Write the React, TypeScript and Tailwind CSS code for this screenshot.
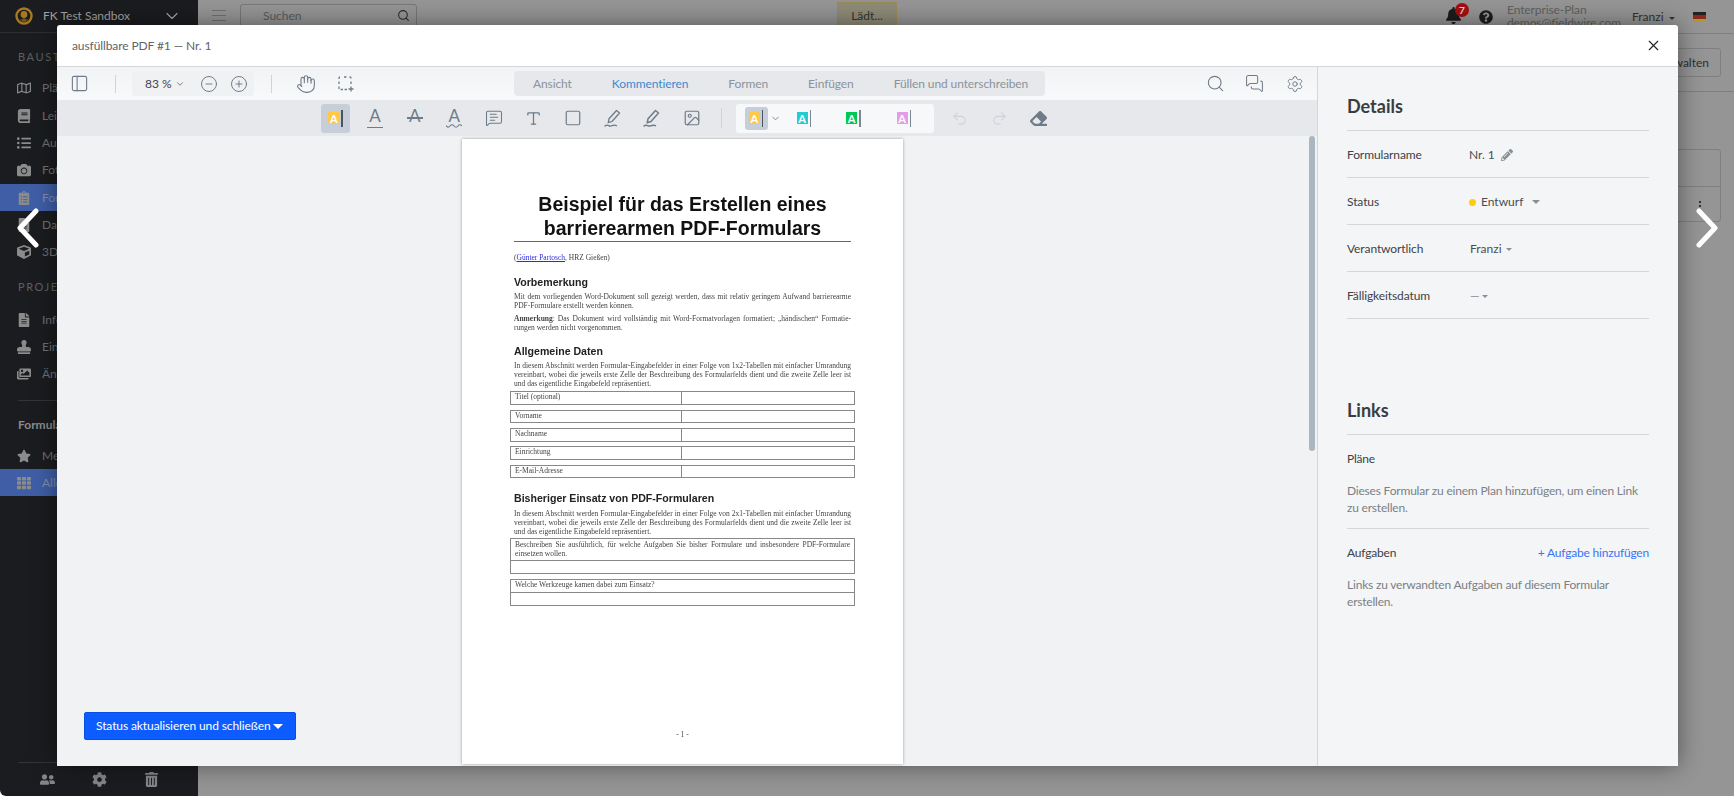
import type { ReactNode } from "react";
import {
  ChevronDown,
  CircleMinus,
  CirclePlus,
  Hand,
  Image,
  MessageSquareText,
  MessagesSquare,
  PanelLeft,
  Redo2,
  Search,
  Settings,
  Square,
  Type,
  Undo2,
  X,
} from "lucide-react";
import {
  FaBell,
  FaBook,
  FaCamera,
  FaClipboardList,
  FaCog,
  FaCube,
  FaEraser,
  FaFileAlt,
  FaImages,
  FaListUl,
  FaPencilAlt,
  FaQuestionCircle,
  FaRegMap,
  FaStamp,
  FaStar,
  FaTh,
  FaTrashAlt,
  FaUserFriends,
} from "react-icons/fa";

// ── Sidebar ───────────────────────────────────────────────────────────────────

function NavRow({ icon, label, active, h = "h-[27px]" }: { icon: ReactNode; label: string; active?: boolean; h?: string }) {
  return (
    <div className={`flex ${h} items-center pl-[17px] text-[12px] ${active ? "bg-[#3f5ea6] text-[#7f8bab]" : "text-[#6f7072]"}`}>
      <span className="flex w-[25px] justify-start text-[14px] text-[#8b8b8c]">{icon}</span>
      {label}
    </div>
  );
}

function Sidebar() {
  return (
    <aside className="flex w-[198px] shrink-0 flex-col bg-[#1b1c1f]">
      <div className="flex h-[33px] items-center border-b border-[#2e2f32] pl-[15px] pr-[16px] text-[12px] text-[#a3a4a5]">
        <svg width="18" height="18" viewBox="0 0 18 18" className="mr-[10px]">
          <circle cx="9" cy="9" r="7.5" fill="none" stroke="#a8781f" strokeWidth="2.4" />
          <circle cx="9" cy="7.5" r="3.4" fill="#a8781f" />
          <path d="M5 13 L9 16 L13 13 L9 11 Z" fill="#6b5321" />
        </svg>
        FK Test Sandbox
        <ChevronDown className="ml-auto h-[20px] w-[20px] text-[#a3a4a5]" strokeWidth={1.4} />
      </div>
      <div className="mt-[15px] flex h-[18px] items-center pl-[18px] text-[11px] tracking-[1.6px] text-[#5f6062]">BAUSTELLE</div>
      <div className="mt-[8px]">
        <NavRow icon={<FaRegMap />} label="Pläne" h="h-[28px]" />
        <NavRow icon={<FaBook />} label="Leistungen" h="h-[27px]" />
        <NavRow icon={<FaListUl />} label="Aufgaben" />
        <NavRow icon={<FaCamera />} label="Fotos" h="h-[28px]" />
        <NavRow icon={<FaClipboardList />} label="Formulare" active />
        <NavRow icon={<FaFileAlt />} label="Dateien" />
        <NavRow icon={<FaCube />} label="3D-BIM" />
      </div>
      <div className="mt-[13px] flex h-[18px] items-center pl-[18px] text-[11px] tracking-[1.6px] text-[#5f6062]">PROJEKT</div>
      <div className="mt-[10px]">
        <NavRow icon={<FaFileAlt />} label="Informationen" />
        <NavRow icon={<FaStamp />} label="Einstellungen" />
        <NavRow icon={<FaImages />} label="Änderungen" />
      </div>
      <div className="mx-[18px] mt-[13px] border-t border-[#333437]" />
      <div className="mt-[15px] flex h-[18px] items-center pl-[18px] text-[12px] font-bold text-[#8a8b8c]">Formulare</div>
      <div className="mt-[8px]">
        <NavRow icon={<FaStar />} label="Meine" />
        <NavRow icon={<FaTh />} label="Alle" active />
      </div>
      <div className="mx-[18px] mt-auto flex h-[34px] items-center border-t border-[#333437] pl-[22px] text-[15px] text-[#85868a]">
        <FaUserFriends className="h-[15px] w-[15px]" />
        <FaCog className="ml-[37px] h-[15px] w-[15px]" />
        <FaTrashAlt className="ml-[37px] h-[15px] w-[15px]" />
      </div>
    </aside>
  );
}

// ── Dimmed page behind the dialog ─────────────────────────────────────────────

function Backdrop() {
  return (
    <main className="flex min-w-0 flex-1 flex-col bg-[#949594]">
      <header className="flex h-[34px] shrink-0 items-start border-b border-[#7e7f7e]">
        <div className="ml-[14px] mt-[10px] flex w-[14px] shrink-0 flex-col gap-[4px]">
          <span className="h-px bg-[#6f706f]" />
          <span className="h-px bg-[#6f706f]" />
          <span className="h-px bg-[#6f706f]" />
        </div>
        <div className="ml-[14px] mt-[4px] flex h-[28px] w-[177px] shrink-0 items-center rounded-t-[3px] border border-[#767776] pb-[5px] pl-[22px] pr-[6px] text-[12px] text-[#5a5b5a]">
          Suchen
          <Search className="ml-auto h-[13px] w-[13px] text-[#2b2b2b]" strokeWidth={2} />
        </div>
        <div className="ml-[420px] mt-[2px] flex h-[30px] w-[60px] shrink-0 items-start justify-center border border-[#9c8a58] bg-[#8f8b78] pt-[4px] text-[12px] text-[#33332e]">
          Lädt...
        </div>
        <div className="relative ml-[548px] mt-[7px] shrink-0 text-[#1c1c1c]">
          <FaBell className="h-[17px] w-[17px]" />
          <span className="absolute -top-[4px] left-[10px] flex h-[14px] w-[14px] items-center justify-center rounded-full bg-[#a50f10] text-[10px] font-bold text-[#d8d8d8]">7</span>
        </div>
        <FaQuestionCircle className="ml-[17px] mt-[10px] h-[14px] w-[14px] shrink-0 text-[#1c1c1c]" />
        <div className="ml-[14px] mt-[3px] w-[113px] shrink-0 text-[12px] leading-[13px] tracking-[-0.1px] text-[#5f605f]">
          <div>Enterprise-Plan</div>
          <div>demos@fieldwire.com</div>
        </div>
        <div className="ml-[12px] mt-[8px] flex shrink-0 items-center text-[12px] text-[#333]">
          Franzi
          <span className="ml-[5px] mt-[2px] border-x-[3px] border-t-[3px] border-x-transparent border-t-[#333]" />
        </div>
        <div className="ml-[18px] mt-[12px] flex h-[10px] w-[13px] shrink-0 flex-col">
          <span className="flex-1 bg-[#222]" />
          <span className="flex-1 bg-[#8c2a1f]" />
          <span className="flex-1 bg-[#b09a2c]" />
        </div>
      </header>
      <div className="flex h-[58px] shrink-0 items-center justify-end border-b border-[#7e7f7e] pr-[13px]">
        <div className="flex h-[29px] items-center rounded-[3px] border border-[#7e7f7e] px-[11px] text-[12px] text-[#2e2e2e]">Verwalten</div>
      </div>
      <div className="ml-[20px] mr-[13px] mt-[57px] rounded-[3px] border border-[#7e7f7e]">
        <div className="h-[37px] border-b border-[#7e7f7e]" />
        <div className="flex h-[34px] items-start justify-end pr-[19px] pt-[14px]">
          <div className="flex flex-col gap-[2px]">
            <span className="h-[2px] w-[2px] bg-[#333]" />
            <span className="h-[2px] w-[2px] bg-[#333]" />
            <span className="h-[2px] w-[2px] bg-[#333]" />
          </div>
        </div>
      </div>
    </main>
  );
}

// ── PDF page ──────────────────────────────────────────────────────────────────

function Line({ children, last }: { children: ReactNode; last?: boolean }) {
  return <div className={`h-[9.2px] whitespace-nowrap ${last ? "" : "[text-align-last:justify]"}`}>{children}</div>;
}

function Heading({ children, className }: { children: ReactNode; className: string }) {
  return <div className={`font-['Liberation_Sans',sans-serif] text-[10.6px] font-bold leading-[13px] text-[#222] ${className}`}>{children}</div>;
}

function PdfRow({ label }: { label: string }) {
  return (
    <div className="mb-[4.9px] flex h-[13.5px] border border-[#888]">
      <div className="w-[171px] border-r border-[#888] pl-[4px] leading-[9px]">{label}</div>
    </div>
  );
}

function PdfPage() {
  return (
    <div className="h-[625px] w-[441px] bg-white pt-[53px] font-['Liberation_Serif',serif] text-[7.5px] leading-[9.2px] text-[#444] shadow-[0_0_3px_rgba(0,0,0,0.35)]">
      <div className="blur-[0.4px]">
        <div className="text-center font-['Liberation_Sans',sans-serif] text-[19.5px] font-bold leading-[24px] text-[#111]">
          <div>Beispiel für das Erstellen eines</div>
          <div>barrierearmen PDF-Formulars</div>
        </div>
        <div className="mx-[52px] mt-[1px] border-t border-[#666]" />
        <div className="mx-[52px] mt-[11px]">
          (<span className="text-[#2a2ae8] underline">Günter Partosch</span>, HRZ Gießen)
        </div>
        <div className="mx-[52px]">
          <Heading className="mt-[14px]">Vorbemerkung</Heading>
          <div className="mt-[2.9px]">
            <Line>Mit dem vorliegenden Word-Dokument soll gezeigt werden, dass mit relativ geringem Aufwand barrierearme</Line>
            <Line last>PDF-Formulare erstellt werden können.</Line>
            <div className="mt-[3.6px]">
              <Line><b>Anmerkung</b>: Das Dokument wird vollständig mit Word-Formatvorlagen formatiert; „händischen“ Formatie-</Line>
              <Line last>rungen werden nicht vorgenommen.</Line>
            </div>
          </div>
          <Heading className="mt-[12.7px]">Allgemeine Daten</Heading>
          <div className="mt-[2.9px]">
            <Line>In diesem Abschnitt werden Formular-Eingabefelder in einer Folge von 1x2-Tabellen mit einfacher Umrandung</Line>
            <Line>vereinbart, wobei die jeweils erste Zelle der Beschreibung des Formularfelds dient und die zweite Zelle leer ist</Line>
            <Line last>und das eigentliche Eingabefeld repräsentiert.</Line>
          </div>
        </div>
        <div className="mx-[48px] mt-[2.7px]">
          <PdfRow label="Titel (optional)" />
          <PdfRow label="Vorname" />
          <PdfRow label="Nachname" />
          <PdfRow label="Einrichtung" />
          <PdfRow label="E-Mail-Adresse" />
        </div>
        <div className="mx-[52px]">
          <Heading className="mt-[14px]">Bisheriger Einsatz von PDF-Formularen</Heading>
          <div className="mt-[3.2px]">
            <Line>In diesem Abschnitt werden Formular-Eingabefelder in einer Folge von 2x1-Tabellen mit einfacher Umrandung</Line>
            <Line>vereinbart, wobei die jeweils erste Zelle der Beschreibung des Formularfelds dient und die zweite Zelle leer ist</Line>
            <Line last>und das eigentliche Eingabefeld repräsentiert.</Line>
          </div>
        </div>
        <div className="mx-[48px] mt-[1.7px] border border-[#888]">
          <div className="h-[22px] border-b border-[#888] px-[4px] pt-[1px]">
            <Line>Beschreiben Sie ausführlich, für welche Aufgaben Sie bisher Formulare und insbesondere PDF-Formulare</Line>
            <Line last>einsetzen wollen.</Line>
          </div>
          <div className="h-[12.3px]" />
        </div>
        <div className="mx-[48px] mt-[5px] border border-[#888]">
          <div className="h-[13px] border-b border-[#888] pl-[4px]">Welche Werkzeuge kamen dabei zum Einsatz?</div>
          <div className="h-[12px]" />
        </div>
        <div className="mt-[124.4px] text-center">- 1 -</div>
      </div>
    </div>
  );
}

// ── Toolbar bits ──────────────────────────────────────────────────────────────

function TextTool({ variant }: { variant: "under" | "strike" | "wave" }) {
  return (
    <div className="relative flex h-[22px] w-[20px] items-start justify-center text-[17px] leading-[17px] text-[#6f7b88]">
      A
      {variant === "under" && <span className="absolute bottom-[1px] left-[2px] right-[2px] h-[1.5px] bg-[#6f7b88]" />}
      {variant === "strike" && <span className="absolute left-[2px] right-[2px] top-[10px] h-[1.5px] bg-[#6f7b88]" />}
      {variant === "wave" && (
        <svg className="absolute bottom-0 left-[2px]" width="16" height="5" viewBox="0 0 16 5" fill="none" stroke="#6f7b88" strokeWidth="1.2">
          <path d="M0 1.5 Q2 4.5 4 2 T8 2 T12 2 T16 2" />
        </svg>
      )}
    </div>
  );
}

function Swatch({ color, bar = "bg-[#7b8794]", className = "" }: { color: string; bar?: string; className?: string }) {
  return (
    <div className={`flex items-center ${className}`}>
      <span className={`flex h-[12px] w-[11px] items-center justify-center ${color} text-[11px] font-bold leading-none text-white`}>A</span>
      <span className={`ml-[2px] h-[17px] w-[1.5px] ${bar}`} />
    </div>
  );
}

function PenTool({ width = 1.3 }: { width?: number }) {
  return (
    <svg width="20" height="20" viewBox="0 0 20 20" fill="none" stroke="#6f7b88" strokeWidth={width} strokeLinejoin="round" strokeLinecap="round">
      <path d="M13.5 2.5l3 2.5-7.5 8.5-3.8 1.2.8-3.9z" />
      <path d="M2 18c2.5-2.5 4 .8 6 0s3.5-1.5 5.5-.3" />
    </svg>
  );
}

function AreaSelect() {
  return (
    <svg width="16" height="16" viewBox="0 0 16 16" fill="none" stroke="#6f7b88" strokeWidth="1.3" className="ml-[22px] shrink-0">
      <path d="M1 10.5V12.5a1 1 0 0 0 1 1H9M1 8V5.5M1 3V2a1 1 0 0 1 1-1h1.5M6 1h3M11.5 1H12a1 1 0 0 1 1 1v1M13 5.5V8" strokeDasharray="2.4 1.6" />
      <path d="M13 10.5v5M10.5 13h5" />
    </svg>
  );
}

const toolButton = "flex h-[29px] w-[29px] items-center justify-center text-[#6f7b88]";

function ToolbarTop() {
  return (
    <div className="flex h-[33px] shrink-0 items-center bg-gradient-to-b from-[#f2f3f5] to-[#f8f9fa] text-[#6f7b88]">
      <PanelLeft className="ml-[13px] h-[19px] w-[19px] shrink-0" strokeWidth={1.4} />
      <span className="ml-[26px] h-[18px] w-px shrink-0 bg-[#cfd4d9]" />
      <div className="ml-[16px] flex h-[25px] w-[122px] shrink-0 items-center rounded-[4px] bg-[#eff1f3] text-[12px] text-[#3c4650]">
        <span className="ml-[13px] whitespace-nowrap">83 %</span>
        <ChevronDown className="ml-[3px] h-[10px] w-[10px] shrink-0" strokeWidth={1.6} />
        <CircleMinus className="ml-[15px] h-[18px] w-[18px] shrink-0 text-[#6f7b88]" strokeWidth={1.3} />
        <CirclePlus className="ml-[12px] h-[18px] w-[18px] shrink-0 text-[#6f7b88]" strokeWidth={1.3} />
      </div>
      <span className="ml-[17px] h-[18px] w-px shrink-0 bg-[#cfd4d9]" />
      <Hand className="ml-[24px] h-[20px] w-[20px] shrink-0" strokeWidth={1.3} />
      <AreaSelect />
      <div className="ml-[160px] flex h-[25px] w-[531px] shrink-0 items-center gap-10 whitespace-nowrap rounded-[4px] bg-[#e6e8eb] pl-[19px] text-[12px] tracking-[-0.1px] text-[#8a939c]">
        <span>Ansicht</span>
        <span className="text-[#3f88d0]">Kommentieren</span>
        <span>Formen</span>
        <span>Einfügen</span>
        <span>Füllen und unterschreiben</span>
      </div>
      <Search className="ml-[161px] h-[19px] w-[19px] shrink-0" strokeWidth={1.4} />
      <MessagesSquare className="ml-[20px] h-[19px] w-[19px] shrink-0" strokeWidth={1.3} />
      <Settings className="ml-[22px] h-[18px] w-[18px] shrink-0" strokeWidth={1.3} />
    </div>
  );
}

function ToolbarAnnotate() {
  return (
    <div className="flex h-[36px] shrink-0 items-center gap-[10.6px] bg-[#e6e8eb] pl-[264px]">
      <div className={`${toolButton} rounded-[3px] bg-[#c5ced9]`}>
        <Swatch color="bg-[#ffc845]" bar="bg-[#4a5560]" />
      </div>
      <div className={toolButton}><TextTool variant="under" /></div>
      <div className={toolButton}><TextTool variant="strike" /></div>
      <div className={toolButton}><TextTool variant="wave" /></div>
      <div className={toolButton}><MessageSquareText className="h-[18px] w-[18px]" strokeWidth={1.4} /></div>
      <div className={toolButton}><Type className="h-[17px] w-[17px]" strokeWidth={1.8} /></div>
      <div className={toolButton}><Square className="h-[18px] w-[18px]" strokeWidth={1.6} /></div>
      <div className={toolButton}><PenTool /></div>
      <div className={toolButton}><PenTool width={1.5} /></div>
      <div className={toolButton}><Image className="h-[18px] w-[18px]" strokeWidth={1.6} /></div>
      <span className="ml-[4px] h-[20px] w-px bg-[#cfd4d9]" />
      <div className="ml-[3px] flex h-[29px] w-[198px] items-center rounded-[3px] bg-[#f7f8f9]">
        <div className="ml-[9px] flex h-[23px] w-[23px] items-center justify-center rounded-[3px] bg-[#c5ced9]">
          <Swatch color="bg-[#ffc845]" bar="bg-[#4a5560]" />
        </div>
        <ChevronDown className="ml-[2px] h-[11px] w-[11px] text-[#6f7b88]" strokeWidth={1.8} />
        <Swatch color="bg-[#22ccd4]" className="ml-[16px]" />
        <Swatch color="bg-[#00c853]" className="ml-[35px]" />
        <Swatch color="bg-[#e39de8]" className="ml-[36px]" />
      </div>
      <Undo2 className="ml-[7px] h-[17px] w-[17px] text-[#cfd3d8]" strokeWidth={1.6} />
      <Redo2 className="ml-[12px] h-[17px] w-[17px] text-[#cfd3d8]" strokeWidth={1.6} />
      <FaEraser className="ml-[12px] h-[17px] w-[17px] text-[#6f7b88]" />
    </div>
  );
}

// ── Details panel ─────────────────────────────────────────────────────────────

function DetailRow({ label, children }: { label: string; children: ReactNode }) {
  return (
    <div className="flex h-[47px] items-center border-b border-[#d3d6da] pt-[2px]">
      <span className="w-[122px] text-[12px] tracking-[-0.1px] text-[#3e4246]">{label}</span>
      {children}
    </div>
  );
}

function Caret({ className = "" }: { className?: string }) {
  return <span className={`border-x-[3px] border-t-[3px] border-x-transparent border-t-[#8a8f94] ${className}`} />;
}

function DetailsPanel() {
  return (
    <div className="w-[361px] shrink-0 border-l border-[#d3d6da] bg-[#f4f5f7] px-[29px]">
      <div className="flex h-[64px] items-end border-b border-[#d3d6da] pb-[12px] text-[18px] font-bold leading-[24px] text-[#3a3d40]">Details</div>
      <DetailRow label="Formularname">
        <span className="text-[12px] text-[#4a4e52]">Nr. 1</span>
        <FaPencilAlt className="ml-[6px] h-[12px] w-[12px] text-[#8a8f94]" />
      </DetailRow>
      <DetailRow label="Status">
        <span className="h-[7px] w-[7px] rounded-full bg-[#ffcc12]" />
        <span className="ml-[5px] text-[12px] text-[#4a4e52]">Entwurf</span>
        <Caret className="ml-[9px] border-x-[4px] border-t-[4px]" />
      </DetailRow>
      <DetailRow label="Verantwortlich">
        <span className="ml-[1px] text-[12px] text-[#4a4e52]">Franzi</span>
        <Caret className="ml-[4px]" />
      </DetailRow>
      <DetailRow label="Fälligkeitsdatum">
        <span className="ml-[1px] text-[12px] text-[#8a8f94]">—</span>
        <Caret className="ml-[2px]" />
      </DetailRow>
      <div className="mt-[75px] flex h-[41px] items-end border-b border-[#d3d6da] pb-[12px] text-[18px] font-bold leading-[24px] text-[#3a3d40]">Links</div>
      <div className="h-[94px] border-b border-[#d3d6da] text-[12px] leading-[17.5px] tracking-[-0.2px]">
        <div className="pt-[15px] text-[#3e4246]">Pläne</div>
        <div className="mt-[14px] text-[#7b8085]">Dieses Formular zu einem Plan hinzufügen, um einen Link zu erstellen.</div>
      </div>
      <div className="text-[12px] leading-[17.5px] tracking-[-0.2px]">
        <div className="flex justify-between pt-[15px] text-[#3e4246]">
          Aufgaben
          <span className="text-[#3b74f5]">+ Aufgabe hinzufügen</span>
        </div>
        <div className="mt-[14px] text-[#7b8085]">Links zu verwandten Aufgaben auf diesem Formular erstellen.</div>
      </div>
    </div>
  );
}

// ── Page ──────────────────────────────────────────────────────────────────────

export default function App() {
  return (
    <div className="relative h-[797px] w-[1734px] overflow-hidden bg-white font-['Lato',sans-serif]">
      <div className="flex h-[796px] overflow-hidden rounded-bl-[6px]">
        <Sidebar />
        <Backdrop />
      </div>

      {/* form dialog */}
      <div className="absolute left-[57px] top-[25px] flex h-[741px] w-[1621px] flex-col rounded-t-[3px] bg-white shadow-[0_0_24px_rgba(0,0,0,0.45)]">
        <div className="flex h-[42px] shrink-0 items-center border-b border-[#d3d6da] pl-[15px] pr-[16px] text-[12px] tracking-[-0.1px] text-[#5f6468]">
          ausfüllbare PDF #1 — Nr. 1
          <X className="ml-auto h-[17px] w-[17px] text-[#222]" strokeWidth={1.6} />
        </div>
        <div className="flex min-h-0 flex-1">
          <div className="relative flex min-w-0 flex-1 flex-col bg-[#f1f2f4]">
            <ToolbarTop />
            <ToolbarAnnotate />
            <div className="flex flex-1 justify-center pr-[9px] pt-[3px]">
              <PdfPage />
            </div>
            <span className="absolute right-[2px] top-[69px] h-[315px] w-[6px] rounded-full bg-[#aab6c0]" />
            <button className="absolute bottom-[26px] left-[27px] flex h-[28px] w-[212px] items-center whitespace-nowrap rounded-[2px] border border-[#0a50e0] bg-[#0d5cff] pl-[11px] text-[12px] tracking-[-0.1px] text-white">
              Status aktualisieren und schließen
              <span className="ml-[2px] border-x-[5px] border-t-[5px] border-x-transparent border-t-white" />
            </button>
          </div>
          <DetailsPanel />
        </div>
      </div>

      {/* previous / next form */}
      <svg width="26" height="40" viewBox="0 0 26 40" fill="none" stroke="white" strokeWidth="5" strokeLinecap="round" strokeLinejoin="round" className="absolute left-[15px] top-[208px]">
        <path d="M21 3 L5 20 L21 37" />
      </svg>
      <svg width="26" height="40" viewBox="0 0 26 40" fill="none" stroke="white" strokeWidth="5" strokeLinecap="round" strokeLinejoin="round" className="absolute left-[1694px] top-[208px]">
        <path d="M5 3 L21 20 L5 37" />
      </svg>
    </div>
  );
}
